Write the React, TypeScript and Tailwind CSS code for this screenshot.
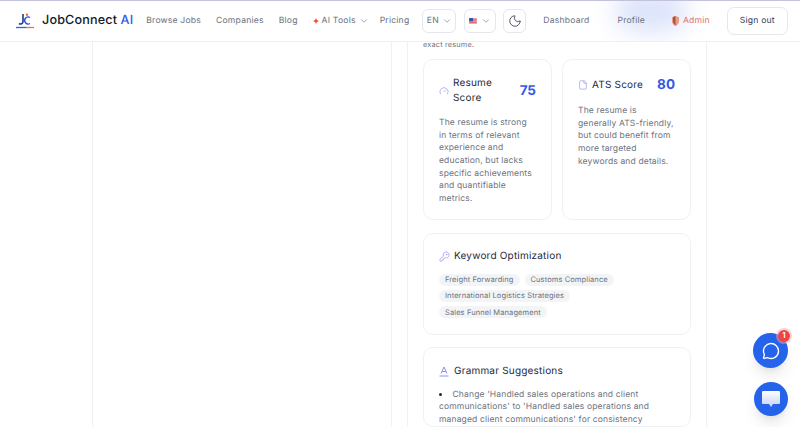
import { ChevronDown, File, Gauge, KeyRound, MessageCircle, Moon } from "lucide-react";

function Logo() {
  return (
    <svg width="20" height="16" viewBox="0 0 20 16" className="shrink-0">
      <path d="M8 1v7.500a2.500 2.500 0 0 1-4 2" fill="none" stroke="#1e3a8a" strokeWidth="1.600" />
      <path d="M15 4.500a3.500 3.500 0 1 0 0 6" fill="none" stroke="#1d4ed8" strokeWidth="1.300" />
      <circle cx="12" cy="1.800" r="1.200" fill="#f97316" />
      <path d="M1 14.500h10" stroke="#2563eb" strokeWidth="1.300" />
      <path d="M11 14.500h8" stroke="#f97316" strokeWidth="1.300" />
    </svg>
  );
}

function Flag() {
  return (
    <svg width="8" height="6" viewBox="0 0 9 7" className="shrink-0">
      <rect width="9" height="7" rx="1" fill="#f1b5bd" />
      <path d="M0 1.500h9M0 3.500h9M0 5.500h9" stroke="#d9485c" strokeWidth="0.900" />
      <rect width="4.500" height="3.800" fill="#3f51a5" />
    </svg>
  );
}

function Spark() {
  return (
    <svg width="6" height="6" viewBox="0 0 6 6" className="mr-[3px] shrink-0">
      <path d="M3 0 3.900 2.100 6 3 3.900 3.900 3 6 2.100 3.900 0 3 2.100 2.100z" fill="#ef4f2b" />
    </svg>
  );
}

function Shield() {
  return (
    <svg width="7" height="10" viewBox="0 0 7 10" className="mr-[4px] shrink-0">
      <path d="M3.500 0 7 1.300V5c0 2.500-1.500 4-3.500 5C1.500 9 0 7.500 0 5V1.300z" fill="#eb9a86" />
      <path d="M3.500 0 1 1v4c0 2 1 3.400 2.500 4.500z" fill="#a8553f" />
    </svg>
  );
}

function Header() {
  return (
    <header className="relative z-10 flex h-[42px] shrink-0 items-center overflow-hidden whitespace-nowrap border-t border-b border-t-[#c4c2da] border-b-[#eeeff2] bg-white text-[8.600px] tracking-[0.2px] text-[#6b7280]">
      <div className="absolute left-[615px] top-[-14px] h-[46px] w-[72px] rounded-full bg-[#dde4fb] blur-md" />
      <div className="relative flex w-full items-center pl-[15px]">
        <Logo />
        <span className="ml-[7px] text-[12.600px] font-medium tracking-[0.15px] text-[#111827]">
          JobConnect <span className="text-[#2f5bea]">AI</span>
        </span>
        <span className="ml-[13px]">Browse Jobs</span>
        <span className="ml-[15px]">Companies</span>
        <span className="ml-[15px]">Blog</span>
        <span className="ml-[15px] flex items-center">
          <Spark />
          AI Tools
          <ChevronDown size={10} strokeWidth={1.5} className="ml-[3px]" />
        </span>
        <span className="ml-[11px]">Pricing</span>
        <span className="ml-[13px] flex h-[24px] w-[34px] items-center justify-center gap-[3px] rounded-[6px] border border-[#e5e7eb]">
          EN
          <ChevronDown size={10} strokeWidth={1.5} />
        </span>
        <span className="ml-[8px] flex h-[24px] w-[32px] items-center justify-center gap-[4px] rounded-[6px] border border-[#e5e7eb]">
          <Flag />
          <ChevronDown size={10} strokeWidth={1.5} />
        </span>
        <span className="ml-[7px] flex h-[24px] w-[23px] items-center justify-center rounded-[6px] border border-[#e5e7eb] text-[#374151]">
          <Moon size={14} strokeWidth={1.5} />
        </span>
        <span className="ml-[17px]">Dashboard</span>
        <span className="ml-[28px]">Profile</span>
        <span className="ml-[27px] flex items-center text-[#e0716f]">
          <Shield />
          Admin
        </span>
        <span className="ml-[17px] flex h-[28px] w-[61px] items-center justify-center rounded-[7px] border border-[#e5e7eb] text-[#374151]">
          Sign out
        </span>
      </div>
    </header>
  );
}

function ScoreCard({ score, title, text, icon }: { score: number; title: string; text: string; icon: React.ReactNode }) {
  return (
    <div className="h-[161px] w-[130px] rounded-[10px] border border-[#f0f1f4] px-[15px] pt-[16px]">
      <div className="flex items-center">
        <span className="mr-[4px] shrink-0 text-[#8b8ff0]">{icon}</span>
        <h3 className="flex-1 text-[10px] font-normal leading-[15px] tracking-[0.2px] text-[#1f2937]">{title}</h3>
        <span className="text-[13.500px] font-bold leading-[18px] text-[#3557e6]">{score}</span>
      </div>
      <p className="mt-[11px] text-[8.500px] leading-[12.650px] tracking-[0.15px] text-[#6b7280]">{text}</p>
    </div>
  );
}

function Tag({ children }: { children: string }) {
  return (
    <span className="rounded-full bg-[#f3f4f6] px-[6px] py-[0.500px] text-[7.500px] leading-[11px] tracking-[0.1px] text-[#6b7280]">
      {children}
    </span>
  );
}

function GrammarIcon() {
  return (
    <svg width="10" height="11" viewBox="0 0 10 11" fill="none" stroke="#8b8ff0" strokeWidth="1" className="shrink-0">
      <path d="M2 7.500 5 1l3 6.500M3 5.500h4M0.500 10h9" />
    </svg>
  );
}

function Analysis() {
  return (
    <section className="flex h-[600px] w-[300px] shrink-0 flex-col border-x border-[#f0f1f4] px-[15px]">
      <p className="text-[7.300px] leading-[6px] tracking-[0.2px] text-[#6b7280]">exact resume.</p>
      <div className="mt-[11px] flex gap-[10px]">
        <ScoreCard
          score={75}
          title="Resume Score"
          icon={<Gauge size={10} strokeWidth={1.5} />}
          text="The resume is strong in terms of relevant experience and education, but lacks specific achievements and quantifiable metrics."
        />
        <ScoreCard
          score={80}
          title="ATS Score"
          icon={<File size={10} strokeWidth={1.5} />}
          text="The resume is generally ATS-friendly, but could benefit from more targeted keywords and details."
        />
      </div>
      <div className="mt-[13px] h-[101.500px] rounded-[10px] border border-[#f0f1f4] px-[15px] pt-[15px]">
        <div className="flex items-center gap-[4px]">
          <KeyRound size={11} strokeWidth={1.5} className="text-[#8b8ff0]" />
          <h3 className="text-[10px] font-normal tracking-[0.2px] text-[#1f2937]">Keyword Optimization</h3>
        </div>
        <div className="mt-[9.500px] flex flex-wrap gap-x-[5px] gap-y-[4.300px]">
          <Tag>Freight Forwarding</Tag>
          <Tag>Customs Compliance</Tag>
          <Tag>International Logistics Strategies</Tag>
          <Tag>Sales Funnel Management</Tag>
        </div>
      </div>
      <div className="mt-[12.500px] rounded-[10px] border border-[#f0f1f4] px-[15px] pt-[16px]">
        <div className="flex items-center gap-[5px]">
          <GrammarIcon />
          <h3 className="text-[10px] font-normal tracking-[0.2px] text-[#1f2937]">Grammar Suggestions</h3>
        </div>
        <ul className="mt-[9.500px] list-inside list-disc text-[8.500px] leading-[12.650px] tracking-[0.15px] text-[#6b7280] marker:text-[9.500px] marker:text-[#1f2937]">
          <li>Change 'Handled sales operations and client communications' to 'Handled sales operations and managed client communications' for consistency</li>
        </ul>
      </div>
    </section>
  );
}

export default function App() {
  return (
    <div className="relative flex h-[427px] w-[800px] flex-col overflow-hidden bg-white font-['Inter',sans-serif] [text-rendering:geometricPrecision]">
      <Header />
      <main className="flex min-h-0 flex-1 gap-[15px] overflow-hidden pl-[92px]">
        <div className="h-full w-[300px] shrink-0 border-x border-[#f0f1f4]" />
        <Analysis />
      </main>
      <button className="absolute left-[753px] top-[333px] flex h-[35px] w-[35px] items-center justify-center rounded-full bg-[#2563eb] text-white shadow-lg">
        <MessageCircle size={18} strokeWidth={1.8} />
        <span className="absolute right-[-2px] top-[-3px] flex h-[12px] w-[12px] items-center justify-center rounded-full bg-[#ef4444] text-[7px] font-bold ring-2 ring-[#fca5a5]/50">
          1
        </span>
      </button>
      <button className="absolute left-[754px] top-[382px] flex h-[34px] w-[34px] items-center justify-center rounded-full bg-[#2563eb] shadow-lg">
        <svg width="20" height="18" viewBox="0 0 20 18">
          <defs>
            <linearGradient id="bubble" x1="0" y1="0" x2="0" y2="1">
              <stop offset="0" stopColor="#ffffff" />
              <stop offset="1" stopColor="#c3d3f7" />
            </linearGradient>
          </defs>
          <path d="M2 1h16a1 1 0 0 1 1 1v11a1 1 0 0 1-1 1h-6l-2 3-2-3H2a1 1 0 0 1-1-1V2a1 1 0 0 1 1-1z" fill="url(#bubble)" />
        </svg>
      </button>
    </div>
  );
}
